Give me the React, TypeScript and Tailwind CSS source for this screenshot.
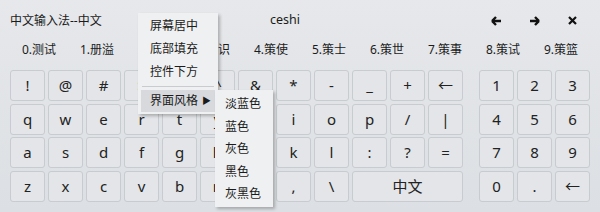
import React from "react";

const font = { fontFamily: '"Noto Sans", "Noto Sans CJK SC", sans-serif' };

const mainRows: string[][] = [
  ["!", "@", "#", "$", "%", "^", "&", "*", "-", "_", "+", "←"],
  ["q", "w", "e", "r", "t", "y", "u", "i", "o", "p", "/", "|"],
  ["a", "s", "d", "f", "g", "h", "j", "k", "l", ":", "?", "="],
  ["z", "x", "c", "v", "b", "n", "m", ",", "\\"],
];

const numRows: string[][] = [
  ["1", "2", "3"],
  ["4", "5", "6"],
  ["7", "8", "9"],
  ["0", ".", "←"],
];

const candidates = ["0.测试", "1.册溢", "2.策议", "3.策识", "4.策使", "5.策士", "6.策世", "7.策事", "8.策试", "9.策篮"];

function Key({ label, wide }: { label: string; wide?: boolean }) {
  return (
    <div
      className={`h-[31px] flex items-center justify-center rounded-[3px] border border-[#c8cbcf] bg-[#e3e5e8] text-[15px] text-[#222] ${
        wide ? "col-span-3" : ""
      }`}
    >
      {label}
    </div>
  );
}

function Arrow({ dir }: { dir: "left" | "right" }) {
  return (
    <svg width="11" height="10" viewBox="0 0 11 10" className={dir === "right" ? "rotate-180" : ""}>
      <path d="M1 5 L5 1 M1 5 L5 9 M1 5 H10" stroke="#111" strokeWidth="2.4" fill="none" />
    </svg>
  );
}

export default function App() {
  return (
    <div
      className="relative w-[600px] h-[212px] overflow-hidden bg-gradient-to-b from-[#e6e8eb] to-[#dcdfe3] text-[#1b1b1b]"
      style={font}
    >
      {/* top bar */}
      <div className="flex h-[38px] items-center pl-[10px] pt-[3px] text-[12px]">
        <span className="w-[260px]">中文输入法--中文</span>
        <span className="text-[12.5px]">ceshi</span>
        <div className="ml-auto mr-[10px] grid w-[111px] grid-cols-3 gap-x-[3px]">
          <div className="flex justify-center"><Arrow dir="left" /></div>
          <div className="flex justify-center"><Arrow dir="right" /></div>
          <div className="flex justify-center">
            <svg width="9" height="9" viewBox="0 0 9 9">
              <path d="M1 1 L8 8 M8 1 L1 8" stroke="#111" strokeWidth="2.2" />
            </svg>
          </div>
        </div>
      </div>

      {/* candidates */}
      <div className="mx-[10px] grid h-[24px] grid-cols-10 items-center text-[12px]">
        {candidates.map((c) => (
          <span key={c} className="text-center">{c}</span>
        ))}
      </div>

      {/* keyboard */}
      <div className="mt-[8px] flex pl-[10px]">
        <div className="grid w-[453px] grid-cols-12 gap-x-[3px] gap-y-[2.5px]">
          {mainRows.map((row, i) => row.map((k, j) => <Key key={`${i}-${j}`} label={k} />))}
          <Key label="中文" wide />
        </div>
        <div className="ml-[16px] grid w-[111px] grid-cols-3 gap-x-[3px] gap-y-[2.5px]">
          {numRows.map((row, i) => row.map((k, j) => <Key key={`n${i}-${j}`} label={k} />))}
        </div>
      </div>

      {/* context menu */}
      <div className="absolute left-[138px] top-[13px] w-[80px] bg-[#eff0f1] pt-[1px] pb-[2px] text-[12px] shadow-[2px_2px_3px_rgba(0,0,0,0.25)]">
        <div className="flex h-[23px] items-center pl-[12px]">屏幕居中</div>
        <div className="flex h-[23px] items-center pl-[12px]">底部填充</div>
        <div className="flex h-[23px] items-center pl-[12px]">控件下方</div>
        <div className="flex h-[7px] items-center px-[4px]">
          <div className="h-px w-full bg-[#c9cbce]" />
        </div>
        <div className="mx-[3px] flex h-[22px] items-center bg-[#d7d9dc] pl-[9px]">
          界面风格
          <span className="ml-[4px] text-[9px]">▶</span>
        </div>
      </div>

      {/* submenu */}
      <div className="absolute left-[215px] top-[90px] w-[58px] bg-[#eff0f1] pt-[3px] pb-[1px] text-[12px] shadow-[2px_2px_3px_rgba(0,0,0,0.25)]">
        {["淡蓝色", "蓝色", "灰色", "黑色", "灰黑色"].map((s) => (
          <div key={s} className="flex h-[22.5px] items-center pl-[10px]">{s}</div>
        ))}
      </div>
    </div>
  );
}
